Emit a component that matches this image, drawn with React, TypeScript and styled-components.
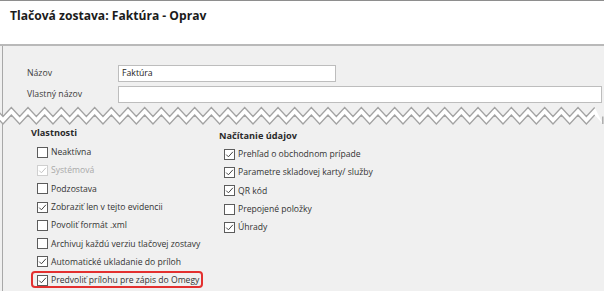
import React from "react";
import styled, { createGlobalStyle } from "styled-components";

const Global = createGlobalStyle`
  html, body { margin: 0; padding: 0; background: #f0f0f0; }
  body { font-family: "Open Sans", "Noto Sans", sans-serif; }
`;

const Window = styled.div`
  width: 604px;
  height: 291px;
  overflow: hidden;
  background: #f0f0f0;
  display: flex;
  flex-direction: column;
`;

const Header = styled.header`
  height: 43px;
  flex: none;
  background: #ffffff;
  border-top: 1px solid #8e8e8e;
  border-bottom: 2px solid #b9b9b9;
  padding-left: 10px;
`;

const Title = styled.h1`
  margin: 0;
  padding-top: 7px;
  font-size: 12.1px;
  line-height: 16px;
  font-weight: 700;
  color: #1b1b1b;
`;

const FormArea = styled.div`
  margin-left: 2px;
  border-left: 1px solid #a8a8a8;
  padding: 19px 0 0 24px;
  display: grid;
  grid-template-columns: 91px 1fr;
  row-gap: 4px;
  align-items: center;
`;

const Label = styled.label`
  font-size: 8.7px;
  color: #3c3c3c;
  line-height: 17px;
`;

const Input = styled.div<{ $w: number }>`
  width: ${(p) => p.$w}px;
  height: 17px;
  box-sizing: border-box;
  border: 1px solid #bdbdbd;
  background: #ffffff;
  padding-left: 3px;
  font-size: 8.7px;
  line-height: 15px;
  color: #222;
`;

const Tear = styled.svg`
  display: block;
  flex: none;
`;

const Lower = styled.div`
  flex: 1;
  margin-left: 2px;
  border-left: 1px solid #a8a8a8;
  padding-left: 28px;
  display: flex;
`;

const Column = styled.div<{ $w?: number; $top: number; $gap: number; $indent: number }>`
  ${(p) => (p.$w ? `width: ${p.$w}px;` : "flex: 1;")}
  padding-top: ${(p) => p.$top}px;
  display: flex;
  flex-direction: column;
  gap: ${(p) => p.$gap}px;
  --indent: ${(p) => p.$indent}px;
`;

const Heading = styled.div`
  font-size: 9.2px;
  font-weight: 700;
  color: #2a2a2a;
  line-height: 15px;
`;

const List = styled.div`
  display: flex;
  flex-direction: column;
`;

const Row = styled.div<{ $disabled?: boolean }>`
  position: relative;
  height: 18.3px;
  display: flex;
  align-items: center;
  padding-left: var(--indent);
  font-size: 8.6px;
  color: ${(p) => (p.$disabled ? "#a9a9a9" : "#333333")};
  white-space: nowrap;
`;

const Box = styled.span<{ $disabled?: boolean }>`
  width: 11px;
  height: 11px;
  box-sizing: border-box;
  border: 1px solid ${(p) => (p.$disabled ? "#cfcfcf" : "#5c5c5c")};
  background: #ffffff;
  margin-right: 3px;
  flex: none;
  display: flex;
  align-items: center;
  justify-content: center;
`;

const Highlight = styled.span`
  position: absolute;
  left: 0;
  top: 0;
  width: 172px;
  height: 17px;
  box-sizing: border-box;
  border: 2px solid #e3302f;
  border-radius: 4px;
  pointer-events: none;
`;

type Item = { text: string; checked?: boolean; disabled?: boolean; highlight?: boolean };

const Check: React.FC<{ disabled?: boolean }> = ({ disabled }) => (
  <svg width="9" height="9" viewBox="0 0 9 9">
    <path
      d="M1.2 4.6 L3.4 6.8 L7.9 1.8"
      fill="none"
      stroke={disabled ? "#c4c4c4" : "#444444"}
      strokeWidth="1"
    />
  </svg>
);

const CheckRow: React.FC<{ item: Item }> = ({ item }) => (
  <Row $disabled={item.disabled}>
    <Box $disabled={item.disabled}>{item.checked && <Check disabled={item.disabled} />}</Box>
    {item.text}
    {item.highlight && <Highlight />}
  </Row>
);

const leftItems: Item[] = [
  { text: "Neaktívna" },
  { text: "Systémová", checked: true, disabled: true },
  { text: "Podzostava" },
  { text: "Zobraziť len v tejto evidencii", checked: true },
  { text: "Povoliť formát .xml" },
  { text: "Archivuj každú verziu tlačovej zostavy" },
  { text: "Automatické ukladanie do príloh", checked: true },
  { text: "Predvoliť prílohu pre zápis do Omegy", checked: true, highlight: true },
];

const rightItems: Item[] = [
  { text: "Prehľad o obchodnom prípade", checked: true },
  { text: "Parametre skladovej karty/ služby", checked: true },
  { text: "QR kód", checked: true },
  { text: "Prepojené položky" },
  { text: "Úhrady", checked: true },
];

const W = 604;
const H = 22;
const P = 16.667;
const topPeak = 4.5;
const topValley = 13.5;
const off = 7.5;

function zigzag(dy: number): [number, number][] {
  const pts: [number, number][] = [];
  for (let k = -1; k <= 37; k++) {
    const xv = 3 + k * P;
    pts.push([xv, topValley + dy]);
    pts.push([xv + P / 2, topPeak + dy]);
  }
  return pts.filter(([x]) => x >= -P && x <= W + P);
}

const TearLine: React.FC = () => {
  const top = zigzag(0).filter(([x]) => x <= 603.01);
  const bottom = zigzag(off).filter(([x]) => x <= 603.01);
  const toStr = (pts: [number, number][]) => pts.map(([x, y]) => `${x.toFixed(2)},${y.toFixed(2)}`).join(" ");
  const poly = toStr([...top, [603, topValley + off], ...bottom.slice().reverse()]);
  return (
    <Tear width={W} height={H} viewBox={`0 0 ${W} ${H}`}>
      <line x1="2.5" y1="0" x2="2.5" y2="13" stroke="#a8a8a8" strokeWidth="1" />
      <line x1="2.5" y1="20.5" x2="2.5" y2={H} stroke="#a8a8a8" strokeWidth="1" />
      <polygon points={poly} fill="#ffffff" stroke="none" />
      <polyline points={toStr(top)} fill="none" stroke="#a3a3a3" strokeWidth="1.3" />
      <polyline points={toStr(bottom)} fill="none" stroke="#a3a3a3" strokeWidth="1.3" />
      <line x1="602.8" y1={topValley} x2="602.8" y2={topValley + off} stroke="#a3a3a3" strokeWidth="1.3" />
    </Tear>
  );
};

export default function App() {
  return (
    <>
      <Global />
      <Window>
        <Header>
          <Title>Tlačová zostava: Faktúra - Oprav</Title>
        </Header>
        <FormArea>
          <Label>Názov</Label>
          <Input $w={218}>Faktúra</Input>
          <Label>Vlastný názov</Label>
          <Input $w={484} />
        </FormArea>
        <TearLine />
        <Lower>
          <Column $w={188} $top={0} $gap={3} $indent={6}>
            <Heading>Vlastnosti</Heading>
            <List>
              {leftItems.map((it) => (
                <CheckRow key={it.text} item={it} />
              ))}
            </List>
          </Column>
          <Column $top={3} $gap={2} $indent={5}>
            <Heading>Načítanie údajov</Heading>
            <List>
              {rightItems.map((it) => (
                <CheckRow key={it.text} item={it} />
              ))}
            </List>
          </Column>
        </Lower>
      </Window>
    </>
  );
}
